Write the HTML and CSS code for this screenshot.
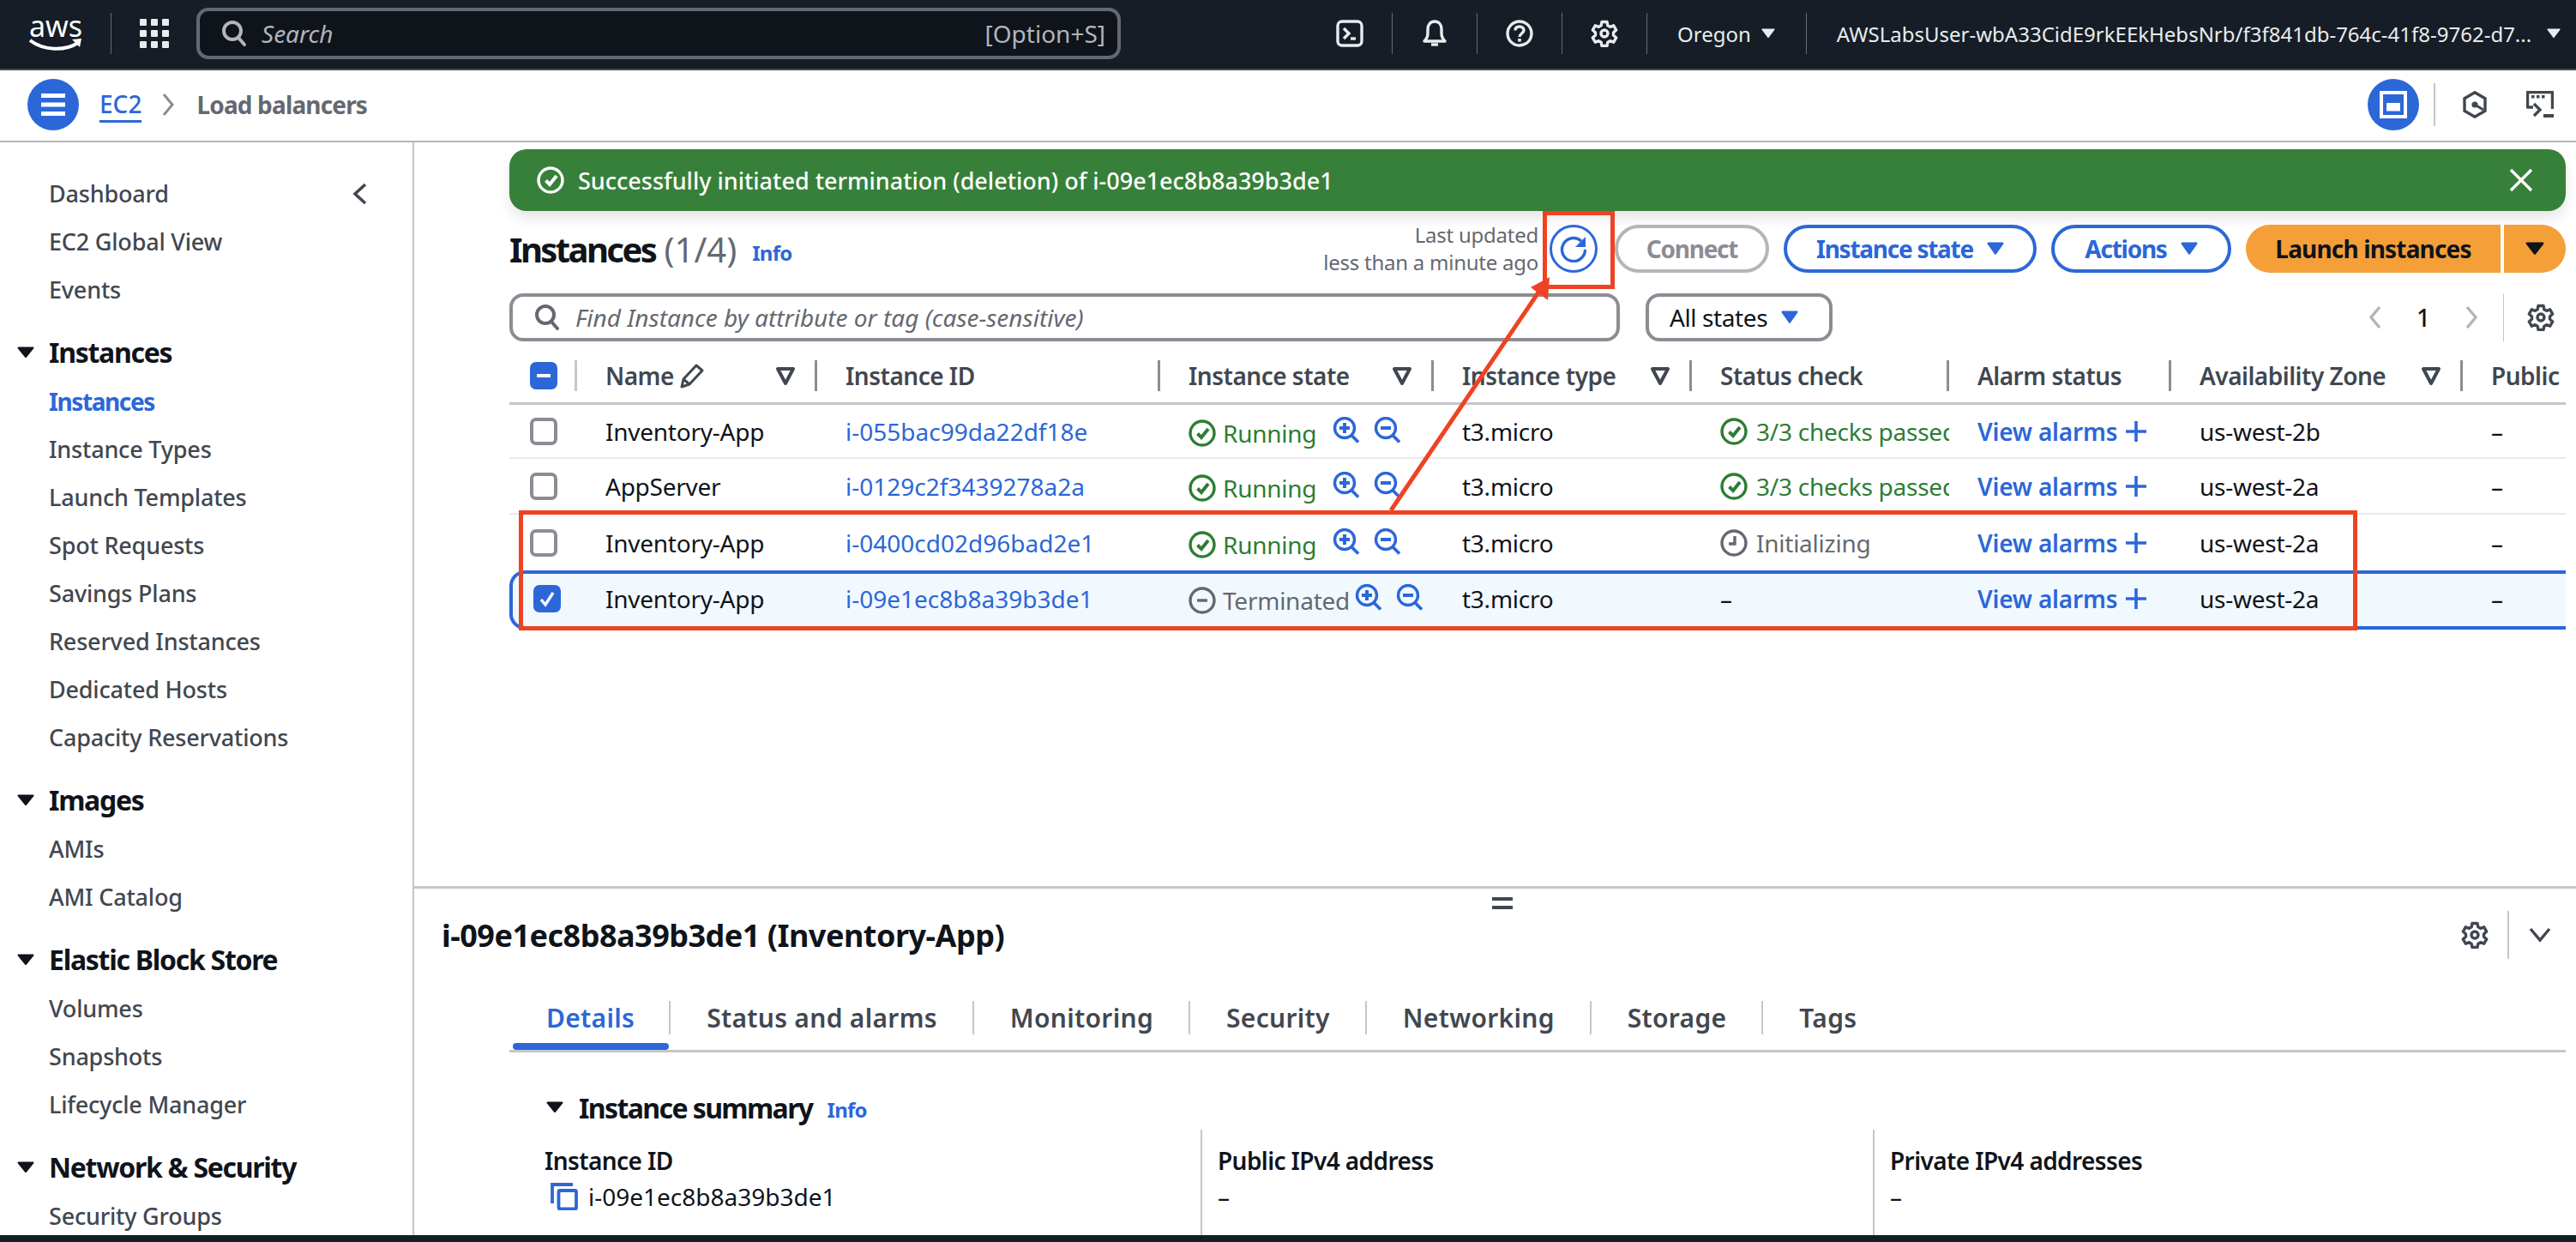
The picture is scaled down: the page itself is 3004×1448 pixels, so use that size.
FILE: index.html
```html
<!DOCTYPE html>
<html lang="en">
<head>
  <meta charset="UTF-8">
  <title>Instances | EC2</title>
  <link rel="stylesheet" href="styles.css">
</head>
<body>
  <svg class="defs" width="0" height="0">
    <symbol id="i-search" viewBox="0 0 32 32"><circle cx="14" cy="13" r="10" fill="none" stroke="currentColor" stroke-width="4"/><path d="M21 21l7 8" fill="none" stroke="currentColor" stroke-width="4" stroke-linecap="round"/></symbol>
    <symbol id="i-gear" viewBox="0 0 32 32"><path d="M13 2.500h6l.9 4.300 2.700 1.500 4.100-1.500 3 5.200-3.200 2.900v3.200l3.200 2.900-3 5.200-4.100-1.500-2.700 1.500-.9 4.300h-6l-.9-4.300-2.700-1.500-4.100 1.500-3-5.200 3.200-2.900v-3.200L2.300 12l3-5.200 4.100 1.500 2.700-1.500z" fill="none" stroke="currentColor" stroke-width="3.400" stroke-linejoin="round"/><circle cx="16" cy="16" r="4" fill="none" stroke="currentColor" stroke-width="3.400"/></symbol>
    <symbol id="i-caret" viewBox="0 0 20 14" preserveAspectRatio="none"><path d="M1.500 1.500h17L10 12z" fill="currentColor" stroke="currentColor" stroke-width="2" stroke-linejoin="round"/></symbol>
    <symbol id="i-filter" viewBox="0 0 24 24"><path d="M3 4h18l-9 17z" fill="none" stroke="currentColor" stroke-width="4" stroke-linejoin="round"/></symbol>
    <symbol id="i-ok" viewBox="0 0 32 32"><circle cx="16" cy="16" r="14" fill="none" stroke="currentColor" stroke-width="3.400"/><path d="M10.500 16.500l4.500 4.500L23 11" fill="none" stroke="currentColor" stroke-width="4"/></symbol>
    <symbol id="i-stop" viewBox="0 0 32 32"><circle cx="16" cy="16" r="14" fill="none" stroke="currentColor" stroke-width="3.400"/><path d="M10 16h12" fill="none" stroke="currentColor" stroke-width="3.400"/></symbol>
    <symbol id="i-clock" viewBox="0 0 32 32"><circle cx="16" cy="16" r="14" fill="none" stroke="currentColor" stroke-width="3.400"/><path d="M17 8v9h-7" fill="none" stroke="currentColor" stroke-width="3.400"/></symbol>
    <symbol id="i-zoom-in" viewBox="0 0 32 32"><circle cx="14" cy="13" r="11.500" fill="none" stroke="currentColor" stroke-width="3.400"/><path d="M22 21.500l8 8" fill="none" stroke="currentColor" stroke-width="3.800"/><path d="M8 13h12M14 7v12" fill="none" stroke="currentColor" stroke-width="4"/></symbol>
    <symbol id="i-zoom-out" viewBox="0 0 32 32"><circle cx="14" cy="13" r="11.500" fill="none" stroke="currentColor" stroke-width="3.400"/><path d="M22 21.500l8 8" fill="none" stroke="currentColor" stroke-width="3.800"/><path d="M8 13h12" fill="none" stroke="currentColor" stroke-width="4"/></symbol>
    <symbol id="i-plus" viewBox="0 0 24 24"><path d="M12 0v24M0 12h24" fill="none" stroke="currentColor" stroke-width="3.600"/></symbol>
  </svg>

  <header class="topbar">
    <div class="aws-logo">
      <span class="aws-word">aws</span>
      <svg class="aws-smile" width="62" height="16" viewBox="0 0 62 16"><path d="M1 2c16 12 40 13 56 3" fill="none" stroke="#fff" stroke-width="4"/><path d="M50 1l11-1-2 10z" fill="#fff"/></svg>
    </div>
    <span class="top-sep top-sep-first"></span>
    <svg class="grid-icon" width="34" height="34" viewBox="0 0 34 34" fill="#e9ebed"><rect x="0" y="0" width="8" height="8" rx="1"/><rect x="13" y="0" width="8" height="8" rx="1"/><rect x="26" y="0" width="8" height="8" rx="1"/><rect x="0" y="13" width="8" height="8" rx="1"/><rect x="13" y="13" width="8" height="8" rx="1"/><rect x="26" y="13" width="8" height="8" rx="1"/><rect x="0" y="26" width="8" height="8" rx="1"/><rect x="13" y="26" width="8" height="8" rx="1"/><rect x="26" y="26" width="8" height="8" rx="1"/></svg>
    <div class="top-search">
      <svg class="icon-32"><use href="#i-search"/></svg>
      <span class="top-search-text">Search</span>
      <span class="top-search-key">[Option+S]</span>
    </div>
    <div class="top-right">
      <span class="top-btn"><svg width="32" height="32" viewBox="0 0 32 32"><rect x="2" y="2" width="28" height="28" rx="5" fill="none" stroke="currentColor" stroke-width="3.400"/><path d="M9 10l6 6-6 6" fill="none" stroke="currentColor" stroke-width="3.400"/><path d="M17 22h6" fill="none" stroke="currentColor" stroke-width="3.400"/></svg></span>
      <span class="top-sep"></span>
      <span class="top-btn"><svg width="32" height="34" viewBox="0 0 32 34"><path d="M4 26c3-3 4-5 4-9v-5c0-5 3-9 8-9s8 4 8 9v5c0 4 1 6 4 9z" fill="none" stroke="currentColor" stroke-width="3.400" stroke-linejoin="round"/><path d="M12 30h8" fill="none" stroke="currentColor" stroke-width="3.400"/></svg></span>
      <span class="top-sep"></span>
      <span class="top-btn"><svg width="32" height="32" viewBox="0 0 32 32"><circle cx="16" cy="16" r="14" fill="none" stroke="currentColor" stroke-width="3.400"/><path d="M11 12.500c0-3 2.200-4.500 5-4.500s5 1.700 5 4.300c0 3.700-5 3.700-5 7.700" fill="none" stroke="currentColor" stroke-width="3.400"/><rect x="14.200" y="22" width="3.600" height="3.600" fill="currentColor"/></svg></span>
      <span class="top-sep"></span>
      <span class="top-btn"><svg class="icon-32"><use href="#i-gear"/></svg></span>
      <span class="top-sep"></span>
      <span class="region">Oregon</span>
      <svg class="top-caret" width="16" height="12"><use href="#i-caret"/></svg>
      <span class="top-sep top-sep-region"></span>
      <span class="account">AWSLabsUser-wbA33CidE9rkEEkHebsNrb/f3f841db-764c-41f8-9762-d7...</span>
      <svg class="top-caret" width="16" height="12"><use href="#i-caret"/></svg>
    </div>
  </header>

  <div class="crumbbar">
    <span class="round-btn"><svg width="28" height="26" viewBox="0 0 28 26" fill="#fff"><rect y="0" width="28" height="5"/><rect y="10.500" width="28" height="5"/><rect y="21" width="28" height="5"/></svg></span>
    <a class="crumb-link" href="#">EC2</a>
    <svg class="crumb-chevron" width="14" height="28" viewBox="0 0 14 28"><path d="M2 2l10 12L2 26" fill="none" stroke="#8c8c94" stroke-width="3"/></svg>
    <span class="crumb-current">Load balancers</span>
    <div class="crumb-right">
      <span class="round-btn"><svg width="32" height="32" viewBox="0 0 32 32"><rect x="2" y="2" width="28" height="28" fill="none" stroke="#fff" stroke-width="4"/><rect x="8" y="14" width="16" height="9.500" fill="#fff"/></svg></span>
      <span class="crumb-sep"></span>
      <svg class="crumb-hex" width="28" height="32" viewBox="0 0 28 32"><path d="M14 1.800l12 7v14.400l-12 7-12-7V8.800z" fill="none" stroke="#414750" stroke-width="3.400"/><circle cx="14" cy="16" r="3.600" fill="#414750"/><path d="M14 16l10 6" fill="none" stroke="#414750" stroke-width="3"/></svg>
      <svg class="crumb-monitor" width="32" height="32" viewBox="0 0 32 32"><path d="M8 19H1.500V1.500h29v19.500" fill="none" stroke="#414750" stroke-width="3.400" stroke-linejoin="round"/><path d="M6 5h3.500v3.500H6zM12 5h3.500v3.500H12zM18 5h3.500v3.500H18z" fill="#414750"/><path d="M9 15l7 7-7 7" fill="none" stroke="#414750" stroke-width="3.400"/><rect x="20" y="27" width="12" height="4" fill="#414750"/></svg>
    </div>
  </div>

  <div class="layout">
    <nav class="sidebar">
      <svg class="side-close" width="18" height="26" viewBox="0 0 18 26"><path d="M15 2L3 13l12 11" fill="none" stroke="#414750" stroke-width="3.600"/></svg>
      <a class="side-item" href="#">Dashboard</a>
      <a class="side-item" href="#">EC2 Global View</a>
      <a class="side-item" href="#">Events</a>
      <div class="side-head"><svg width="20" height="14"><use href="#i-caret"/></svg>Instances</div>
      <a class="side-item active" href="#">Instances</a>
      <a class="side-item" href="#">Instance Types</a>
      <a class="side-item" href="#">Launch Templates</a>
      <a class="side-item" href="#">Spot Requests</a>
      <a class="side-item" href="#">Savings Plans</a>
      <a class="side-item" href="#">Reserved Instances</a>
      <a class="side-item" href="#">Dedicated Hosts</a>
      <a class="side-item" href="#">Capacity Reservations</a>
      <div class="side-head"><svg width="20" height="14"><use href="#i-caret"/></svg>Images</div>
      <a class="side-item" href="#">AMIs</a>
      <a class="side-item" href="#">AMI Catalog</a>
      <div class="side-head"><svg width="20" height="14"><use href="#i-caret"/></svg>Elastic Block Store</div>
      <a class="side-item" href="#">Volumes</a>
      <a class="side-item" href="#">Snapshots</a>
      <a class="side-item" href="#">Lifecycle Manager</a>
      <div class="side-head"><svg width="20" height="14"><use href="#i-caret"/></svg>Network &amp; Security</div>
      <a class="side-item" href="#">Security Groups</a>
    </nav>

    <main class="content">
      <section class="upper">
        <div class="flash">
          <svg class="icon-32"><use href="#i-ok"/></svg>
          <span class="flash-text">Successfully initiated termination (deletion) of i-09e1ec8b8a39b3de1</span>
          <svg class="flash-close" width="28" height="28" viewBox="0 0 28 28"><path d="M2 2l24 24M26 2L2 26" fill="none" stroke="#fff" stroke-width="3.400"/></svg>
        </div>

        <div class="list-header">
          <h1 class="list-title"><span class="list-name">Instances</span> <span class="count">(1/4)</span></h1>
          <a class="info" href="#">Info</a>
          <div class="updated">Last updated<br>less than a minute ago</div>
          <span class="refresh"><svg width="32" height="32" viewBox="0 0 32 32"><path d="M25 7A13.500 13.500 0 1 0 29.500 17" fill="none" stroke="currentColor" stroke-width="3.400"/><path d="M30 2v12H18z" fill="currentColor"/></svg></span>
          <button class="btn btn-disabled btn-connect">Connect</button>
          <button class="btn btn-normal btn-state">Instance state <svg width="20" height="16"><use href="#i-caret"/></svg></button>
          <button class="btn btn-normal btn-actions">Actions <svg width="20" height="16"><use href="#i-caret"/></svg></button>
          <div class="launch">
            <button class="launch-main">Launch instances</button>
            <button class="launch-drop"><svg width="22" height="16"><use href="#i-caret"/></svg></button>
          </div>
        </div>

        <div class="filter-row">
          <div class="filter-input">
            <svg class="icon-32"><use href="#i-search"/></svg>
            <span>Find Instance by attribute or tag (case-sensitive)</span>
          </div>
          <div class="filter-select">All states <svg width="20" height="16"><use href="#i-caret"/></svg></div>
          <div class="pager">
            <svg width="16" height="28" viewBox="0 0 16 28"><path d="M13 2L3 14l10 12" fill="none" stroke="#b4b4bb" stroke-width="3.400"/></svg>
            <span class="page-num">1</span>
            <svg width="16" height="28" viewBox="0 0 16 28"><path d="M3 2l10 12L3 26" fill="none" stroke="#b4b4bb" stroke-width="3.400"/></svg>
            <span class="pager-sep"></span>
            <svg class="icon-32 pager-gear"><use href="#i-gear"/></svg>
          </div>
        </div>

        <div class="table">
          <div class="thead">
            <div class="th th-check"><span class="check check-mixed"></span></div>
            <div class="th">Name <svg class="pencil" width="32" height="32" viewBox="0 0 32 32"><path d="M3 29l2-9L20 4l7 6-15 16zM5 20l7 6" fill="none" stroke="currentColor" stroke-width="3" stroke-linejoin="round"/></svg><svg class="sort" width="24" height="24"><use href="#i-filter"/></svg></div>
            <div class="th">Instance ID</div>
            <div class="th">Instance state<svg class="sort" width="24" height="24"><use href="#i-filter"/></svg></div>
            <div class="th">Instance type<svg class="sort" width="24" height="24"><use href="#i-filter"/></svg></div>
            <div class="th">Status check</div>
            <div class="th">Alarm status</div>
            <div class="th">Availability Zone<svg class="sort" width="24" height="24"><use href="#i-filter"/></svg></div>
            <div class="th th-last">Public</div>
          </div>

          <div class="tr tr-first">
            <div class="td td-check"><span class="check"></span></div>
            <div class="td">Inventory-App</div>
            <div class="td"><a href="#">i-055bac99da22df18e</a></div>
            <div class="td state-running"><svg class="icon-32 state-icon"><use href="#i-ok"/></svg><span class="state-text">Running</span><svg class="icon-32 zoom-btn"><use href="#i-zoom-in"/></svg><svg class="icon-32 zoom-btn"><use href="#i-zoom-out"/></svg></div>
            <div class="td">t3.micro</div>
            <div class="td status-ok"><svg class="icon-32"><use href="#i-ok"/></svg><span class="status-text">3/3 checks passed</span></div>
            <div class="td"><a class="alarm" href="#">View alarms <svg width="24" height="24"><use href="#i-plus"/></svg></a></div>
            <div class="td">us-west-2b</div>
            <div class="td">–</div>
          </div>

          <div class="tr">
            <div class="td td-check"><span class="check"></span></div>
            <div class="td">AppServer</div>
            <div class="td"><a href="#">i-0129c2f3439278a2a</a></div>
            <div class="td state-running"><svg class="icon-32 state-icon"><use href="#i-ok"/></svg><span class="state-text">Running</span><svg class="icon-32 zoom-btn"><use href="#i-zoom-in"/></svg><svg class="icon-32 zoom-btn"><use href="#i-zoom-out"/></svg></div>
            <div class="td">t3.micro</div>
            <div class="td status-ok"><svg class="icon-32"><use href="#i-ok"/></svg><span class="status-text">3/3 checks passed</span></div>
            <div class="td"><a class="alarm" href="#">View alarms <svg width="24" height="24"><use href="#i-plus"/></svg></a></div>
            <div class="td">us-west-2a</div>
            <div class="td">–</div>
          </div>

          <div class="tr tr-before-selected">
            <div class="td td-check"><span class="check"></span></div>
            <div class="td">Inventory-App</div>
            <div class="td"><a href="#">i-0400cd02d96bad2e1</a></div>
            <div class="td state-running"><svg class="icon-32 state-icon"><use href="#i-ok"/></svg><span class="state-text">Running</span><svg class="icon-32 zoom-btn"><use href="#i-zoom-in"/></svg><svg class="icon-32 zoom-btn"><use href="#i-zoom-out"/></svg></div>
            <div class="td">t3.micro</div>
            <div class="td status-init"><svg class="icon-32"><use href="#i-clock"/></svg><span class="status-text">Initializing</span></div>
            <div class="td"><a class="alarm" href="#">View alarms <svg width="24" height="24"><use href="#i-plus"/></svg></a></div>
            <div class="td">us-west-2a</div>
            <div class="td">–</div>
          </div>

          <div class="tr tr-selected">
            <div class="td td-check"><span class="check check-on"><svg width="22" height="22" viewBox="0 0 22 22"><path d="M4 12l5 6 9-14" fill="none" stroke="#fff" stroke-width="3.400"/></svg></span></div>
            <div class="td">Inventory-App</div>
            <div class="td"><a href="#">i-09e1ec8b8a39b3de1</a></div>
            <div class="td state-stopped"><svg class="icon-32 state-icon"><use href="#i-stop"/></svg><span class="state-text">Terminated</span><svg class="icon-32 zoom-btn"><use href="#i-zoom-in"/></svg><svg class="icon-32 zoom-btn"><use href="#i-zoom-out"/></svg></div>
            <div class="td">t3.micro</div>
            <div class="td">–</div>
            <div class="td"><a class="alarm" href="#">View alarms <svg width="24" height="24"><use href="#i-plus"/></svg></a></div>
            <div class="td">us-west-2a</div>
            <div class="td">–</div>
          </div>
        </div>
      </section>

      <section class="lower">
        <div class="drag-handle"></div>
        <div class="detail-head">
          <h2 class="detail-title">i-09e1ec8b8a39b3de1 (Inventory-App)</h2>
          <div class="detail-tools">
            <svg class="icon-32"><use href="#i-gear"/></svg>
            <span class="detail-sep"></span>
            <svg width="28" height="18" viewBox="0 0 28 18"><path d="M3 2l11 13L25 2" fill="none" stroke="#414750" stroke-width="3.400"/></svg>
          </div>
        </div>

        <div class="tabs">
          <a class="tab tab-active" href="#">Details</a>
          <a class="tab" href="#">Status and alarms</a>
          <a class="tab" href="#">Monitoring</a>
          <a class="tab" href="#">Security</a>
          <a class="tab" href="#">Networking</a>
          <a class="tab" href="#">Storage</a>
          <a class="tab tab-last" href="#">Tags</a>
        </div>

        <div class="summary">
          <div class="summary-head"><svg width="20" height="14"><use href="#i-caret"/></svg><h3>Instance summary</h3><a class="info" href="#">Info</a></div>
          <div class="summary-grid">
            <div class="field field-first">
              <div class="field-label">Instance ID</div>
              <div class="field-value"><svg class="copy" width="32" height="32" viewBox="0 0 32 32"><path d="M2 24V2h24" fill="none" stroke="#2c67d8" stroke-width="3.800"/><rect x="9.500" y="9" width="20.500" height="21.500" rx="1.500" fill="none" stroke="#2c67d8" stroke-width="3.800"/></svg>i-09e1ec8b8a39b3de1</div>
            </div>
            <div class="field">
              <div class="field-label">Public IPv4 address</div>
              <div class="field-value">–</div>
            </div>
            <div class="field">
              <div class="field-label">Private IPv4 addresses</div>
              <div class="field-value">–</div>
            </div>
          </div>
        </div>
      </section>
    </main>
  </div>

  <div class="bottombar"></div>

  <!-- annotations drawn on top of the screenshot -->
  <div class="mark mark-rows"></div>
  <div class="mark mark-refresh"></div>
  <svg class="mark-arrow" width="3004" height="1448" viewBox="0 0 3004 1448"><path d="M1622 595L1796 338" fill="none" stroke="#ee4323" stroke-width="5"/><path d="M1807 323l-22 12 20 15z" fill="#ee4323"/></svg>
</body>
</html>
```

FILE: styles.css
```css
* {
  margin: 0;
  padding: 0;
  box-sizing: border-box;
}

html, body {
  height: 100%;
  overflow: hidden;
}

body {
  position: relative;
  display: flex;
  flex-direction: column;
  font-family: "Noto Sans", sans-serif;
  font-size: 28px;
  color: #0f141a;
  background: #fff;
}

a {
  color: #2c67d8;
  text-decoration: none;
}

svg {
  flex: none;
}

.defs {
  position: absolute;
}

.icon-32 {
  width: 32px;
  height: 32px;
}

/* top bar */
.topbar {
  display: flex;
  align-items: center;
  flex: none;
  height: 82px;
  padding: 0 0 2px 34px;
  background: #161d26;
  border-bottom: 2px solid #414750;
  color: #e9ebed;
}

.aws-logo {
  display: flex;
  flex-direction: column;
  align-items: center;
  width: 62px;
  color: #fff;
}

.aws-word {
  font-size: 34px;
  line-height: 26px;
  height: 28px;
}

.top-sep {
  flex: none;
  width: 1px;
  height: 48px;
  background: #5f6b7a;
}

.top-sep-first {
  margin: 0 33px;
}

.grid-icon {
  margin-right: 32px;
}

.top-search {
  display: flex;
  flex: none;
  align-items: center;
  width: 1078px;
  height: 60px;
  padding: 0 14px 0 24px;
  background: #0f141a;
  border: 4px solid #656871;
  border-radius: 14px;
  color: #b4b4bb;
}

.top-search-text {
  margin-left: 16px;
  font-style: italic;
}

.top-search-key {
  margin-left: auto;
}

.top-right {
  display: flex;
  flex: none;
  align-items: center;
  margin-left: 251px;
}

.top-btn {
  display: flex;
  width: 32px;
  justify-content: center;
  margin-right: 33px;
}

.top-right .top-sep {
  margin-right: 33px;
}

.region {
  font-size: 24px;
  margin-left: 2px;
}

.top-caret {
  margin-left: 12px;
  color: #e9ebed;
}

.account + .top-caret {
  margin-left: 18px;
}

.top-sep-region {
  margin-left: 36px;
}

.account {
  font-size: 24px;
  margin-left: 2px;
  white-space: nowrap;
}

/* breadcrumb bar */
.crumbbar {
  display: flex;
  align-items: center;
  flex: none;
  height: 84px;
  padding: 0 26px 2px 32px;
  border-bottom: 2px solid #b4b4bb;
}

.round-btn {
  display: flex;
  align-items: center;
  justify-content: center;
  width: 60px;
  height: 60px;
  border-radius: 50%;
  background: #2c67d8;
}

.crumb-link {
  margin-left: 24px;
  border-bottom: 3px solid #2c67d8;
  font-weight: 500;
}

.crumb-chevron {
  margin: 0 26px 0 24px;
}

.crumb-current {
  font-weight: 700;
  letter-spacing: -0.03em;
  color: #656871;
}

.crumb-right {
  display: flex;
  align-items: center;
  margin-left: auto;
}

.crumb-sep {
  width: 2px;
  height: 50px;
  margin: 0 32px 0 17px;
  background: #c6c6cd;
}

.crumb-monitor {
  margin-left: 46px;
}

/* side nav */
.layout {
  display: flex;
  flex: 1;
  min-height: 0;
}

.sidebar {
  position: relative;
  flex: none;
  width: 483px;
  padding: 32px 0 0 57px;
  border-right: 2px solid #c6c6cd;
  overflow: hidden;
}

.side-close {
  position: absolute;
  top: 47px;
  left: 411px;
}

.side-item {
  display: block;
  height: 56px;
  line-height: 56px;
  color: #414750;
  font-size: 27px;
  font-weight: 500;
  letter-spacing: -0.2px;
  white-space: nowrap;
}

.side-item.active {
  color: #2c67d8;
  font-size: 28px;
  font-weight: 700;
  letter-spacing: -0.05em;
}

.side-head {
  display: flex;
  align-items: center;
  height: 57px;
  margin: 17px 0 0 -37px;
  padding-bottom: 2px;
  font-size: 32px;
  font-weight: 700;
  letter-spacing: -0.04em;
}

.side-head svg {
  margin-right: 17px;
}

/* main area */
.content {
  display: flex;
  flex-direction: column;
  flex: 1;
  min-width: 0;
}

.upper {
  flex: none;
  height: 867px;
  padding: 8px 12px 0 111px;
}

.flash {
  display: flex;
  align-items: center;
  height: 72px;
  padding: 0 38px 0 32px;
  border-radius: 20px;
  background: #37803a;
  color: #fff;
  box-shadow: 0 8px 16px rgba(0, 0, 0, 0.1);
}

.flash-text {
  margin-left: 16px;
  font-size: 27px;
  font-weight: 500;
}

.flash-close {
  margin-left: auto;
}

.list-header {
  display: flex;
  align-items: center;
  height: 56px;
  margin-top: 16px;
}

.list-title {
  font-size: 40px;
  font-weight: 700;
  white-space: nowrap;
}

.list-name {
  letter-spacing: -0.065em;
}

.count {
  font-weight: 400;
  color: #656871;
}

.info {
  font-size: 24px;
  font-weight: 700;
  letter-spacing: -0.03em;
}

.list-header .info {
  margin: 8px 0 0 18px;
}

.updated {
  margin-left: auto;
  font-size: 24px;
  line-height: 32px;
  letter-spacing: -0.25px;
  color: #656871;
  text-align: right;
}

.refresh {
  display: flex;
  align-items: center;
  justify-content: center;
  width: 56px;
  height: 56px;
  margin: 0 20px 0 13px;
  border: 3px solid #2c67d8;
  border-radius: 50%;
  color: #2c67d8;
}

.btn {
  display: flex;
  align-items: center;
  justify-content: center;
  gap: 16px;
  height: 56px;
  margin-right: 17px;
  border-radius: 28px;
  background: #fff;
  font: 700 28px "Noto Sans", sans-serif;
  letter-spacing: -0.045em;
}

.btn-disabled {
  border: 4px solid #b4b4bb;
  color: #8c8c94;
}

.btn-normal {
  border: 4px solid #2c67d8;
  color: #2c67d8;
}

.btn-connect {
  width: 180px;
}

.btn-state {
  width: 295px;
}

.btn-actions {
  width: 210px;
}

.launch {
  display: flex;
  gap: 4px;
}

.launch button {
  display: flex;
  align-items: center;
  justify-content: center;
  height: 56px;
  border: 0;
  background: #f49f37;
  color: #0f141a;
  font: 700 28px "Noto Sans", sans-serif;
  letter-spacing: -0.03em;
}

.launch-main {
  width: 297px;
  border-radius: 28px 0 0 28px;
}

.launch-drop {
  width: 72px;
  border-radius: 0 28px 28px 0;
}

.filter-row {
  display: flex;
  align-items: center;
  margin-top: 24px;
}

.filter-input {
  display: flex;
  align-items: center;
  gap: 17px;
  width: 1295px;
  height: 56px;
  padding-left: 24px;
  border: 4px solid #8c8c94;
  border-radius: 16px;
  color: #656871;
  font-style: italic;
}

.filter-select {
  display: flex;
  align-items: center;
  gap: 16px;
  width: 218px;
  height: 56px;
  margin-left: 30px;
  padding-left: 24px;
  border: 4px solid #8c8c94;
  border-radius: 16px;
  letter-spacing: -0.4px;
}

.filter-select svg {
  color: #2c67d8;
}

.pager {
  display: flex;
  align-items: center;
  margin-left: auto;
  color: #414750;
}

.page-num {
  margin: 0 40px;
  font-weight: 500;
  color: #0f141a;
}

.pager-sep {
  width: 1px;
  height: 56px;
  margin: 0 27px 0 29px;
  background: #c6c6cd;
}

.pager-gear {
  margin-right: 13px;
}

/* instance table */
.table {
  margin-top: 22px;
}

.thead, .tr {
  display: grid;
  grid-template-columns: 79px 280px 400px 319px 301px 300px 259px 340px 120px;
}

.thead {
  height: 49px;
  box-shadow: 0 3px 0 #c6c6cd;
  color: #414750;
  font-weight: 600;
  letter-spacing: -0.5px;
}

.th {
  display: flex;
  align-items: center;
  height: 36px;
  padding: 0 22px 0 33px;
  border-right: 3px solid #8c8c94;
  white-space: nowrap;
  overflow: hidden;
}

.th-check {
  padding: 0 0 0 24px;
  border-right-color: #c6c6cd;
}

.th-last {
  border-right: 0;
}

.pencil {
  margin-left: 6px;
}

.sort {
  margin-left: auto;
}

.tr {
  height: 65px;
  align-items: center;
  border-bottom: 2px solid #e9e9ed;
}

.tr-first {
  height: 63px;
  margin-top: 3px;
}

.td {
  display: flex;
  align-items: center;
  padding-left: 33px;
  letter-spacing: -0.25px;
  white-space: nowrap;
  overflow: hidden;
}

.td a {
  letter-spacing: 0;
}

.td-check {
  padding-left: 24px;
}

.check {
  display: flex;
  align-items: center;
  justify-content: center;
  width: 32px;
  height: 32px;
  border: 4px solid #8c8c94;
  border-radius: 7px;
}

.check-mixed, .check-on {
  border-color: #2c67d8;
  background: #2c67d8;
}

.check-mixed::after {
  content: "";
  width: 16px;
  height: 4px;
  background: #fff;
}

.state-running, .status-ok {
  color: #2d7d33;
}

.state-stopped, .status-init {
  color: #656871;
}

.state-icon {
  margin-top: 4px;
}

.state-text {
  min-width: 122px;
  margin: 4px 0 0 8px;
}

.zoom-btn {
  color: #2c67d8;
  margin: 0 0 2px 16px;
}

.state-text + .zoom-btn {
  margin-left: 6px;
}

.status-text {
  margin-left: 10px;
}

.td .alarm {
  display: flex;
  align-items: center;
  gap: 10px;
  font-weight: 600;
  letter-spacing: -0.2px;
}

.tr-before-selected {
  border-bottom: 0;
}

.tr-selected {
  height: 69px;
  padding-bottom: 4px;
  border-top: 4px solid #2c67d8;
  border-bottom: 4px solid #2c67d8;
  border-left: 4px solid #2c67d8;
  border-radius: 18px 0 0 18px;
  background: #f2f9fe;
  grid-template-columns: 75px 280px 400px 319px 301px 300px 259px 340px 120px;
}

/* split panel */
.lower {
  position: relative;
  flex: 1;
  min-height: 0;
  border-top: 3px solid #c6c6cd;
  overflow: hidden;
}

.drag-handle {
  position: absolute;
  top: 10px;
  left: 1257px;
  width: 24px;
  height: 14px;
  border-top: 4px solid #414750;
  border-bottom: 4px solid #414750;
}

.detail-head {
  display: flex;
  align-items: center;
  height: 64px;
  margin-top: 22px;
  padding: 0 28px 0 32px;
}

.detail-title {
  font-size: 36px;
  font-weight: 700;
  letter-spacing: -0.014em;
}

.detail-tools {
  display: flex;
  align-items: center;
  margin-left: auto;
  color: #414750;
}

.detail-sep {
  width: 2px;
  height: 56px;
  margin: 0 22px;
  background: #c6c6cd;
}

.tabs {
  display: flex;
  align-items: center;
  height: 81px;
  margin: 24px 12px 0 111px;
  padding-top: 3px;
  border-bottom: 3px solid #c6c6cd;
}

.tab {
  position: relative;
  height: 39px;
  padding: 0 41px 0 42px;
  line-height: 39px;
  border-right: 2px solid #c6c6cd;
  color: #414750;
  font-size: 30px;
  font-weight: 600;
  letter-spacing: 0.3px;
}

.tab-last {
  border-right: 0;
}

.tab-active {
  padding: 0 40px 0 43px;
  color: #2c67d8;
}

.tab-active::after {
  content: "";
  position: absolute;
  left: 4px;
  right: 0;
  top: 49px;
  height: 8px;
  border-radius: 4px;
  background: #2c67d8;
}

.summary {
  padding: 0 12px 0 152px;
}

.summary-head {
  display: flex;
  align-items: center;
  height: 44px;
  margin-top: 42px;
}

.summary-head svg {
  margin: 0 18px 0 2px;
}

.summary-head h3 {
  font-size: 32px;
  font-weight: 700;
  letter-spacing: -0.05em;
}

.summary-head .info {
  margin: 4px 0 0 17px;
}

.summary-grid {
  display: grid;
  grid-template-columns: 765px 784px 1fr;
  margin-top: 4px;
}

.field {
  height: 123px;
  padding: 16px 0 0 18px;
  border-left: 2px solid #c6c6cd;
}

.field-first {
  padding-left: 0;
  border-left: 0;
}

.field-label {
  font-weight: 600;
  line-height: 40px;
  letter-spacing: -0.6px;
}

.field-value {
  display: flex;
  align-items: center;
  height: 40px;
  margin-top: 2px;
}

.copy {
  margin: 0 12px 0 7px;
}

.bottombar {
  flex: none;
  height: 8px;
  background: #161d26;
}

/* red annotations */
.mark {
  position: absolute;
  border: 5px solid #ee4323;
}

.mark-rows {
  top: 595px;
  left: 605px;
  width: 2144px;
  height: 140px;
}

.mark-refresh {
  top: 246px;
  left: 1799px;
  width: 84px;
  height: 91px;
}

.mark-arrow {
  position: absolute;
  top: 0;
  left: 0;
  pointer-events: none;
}
```
